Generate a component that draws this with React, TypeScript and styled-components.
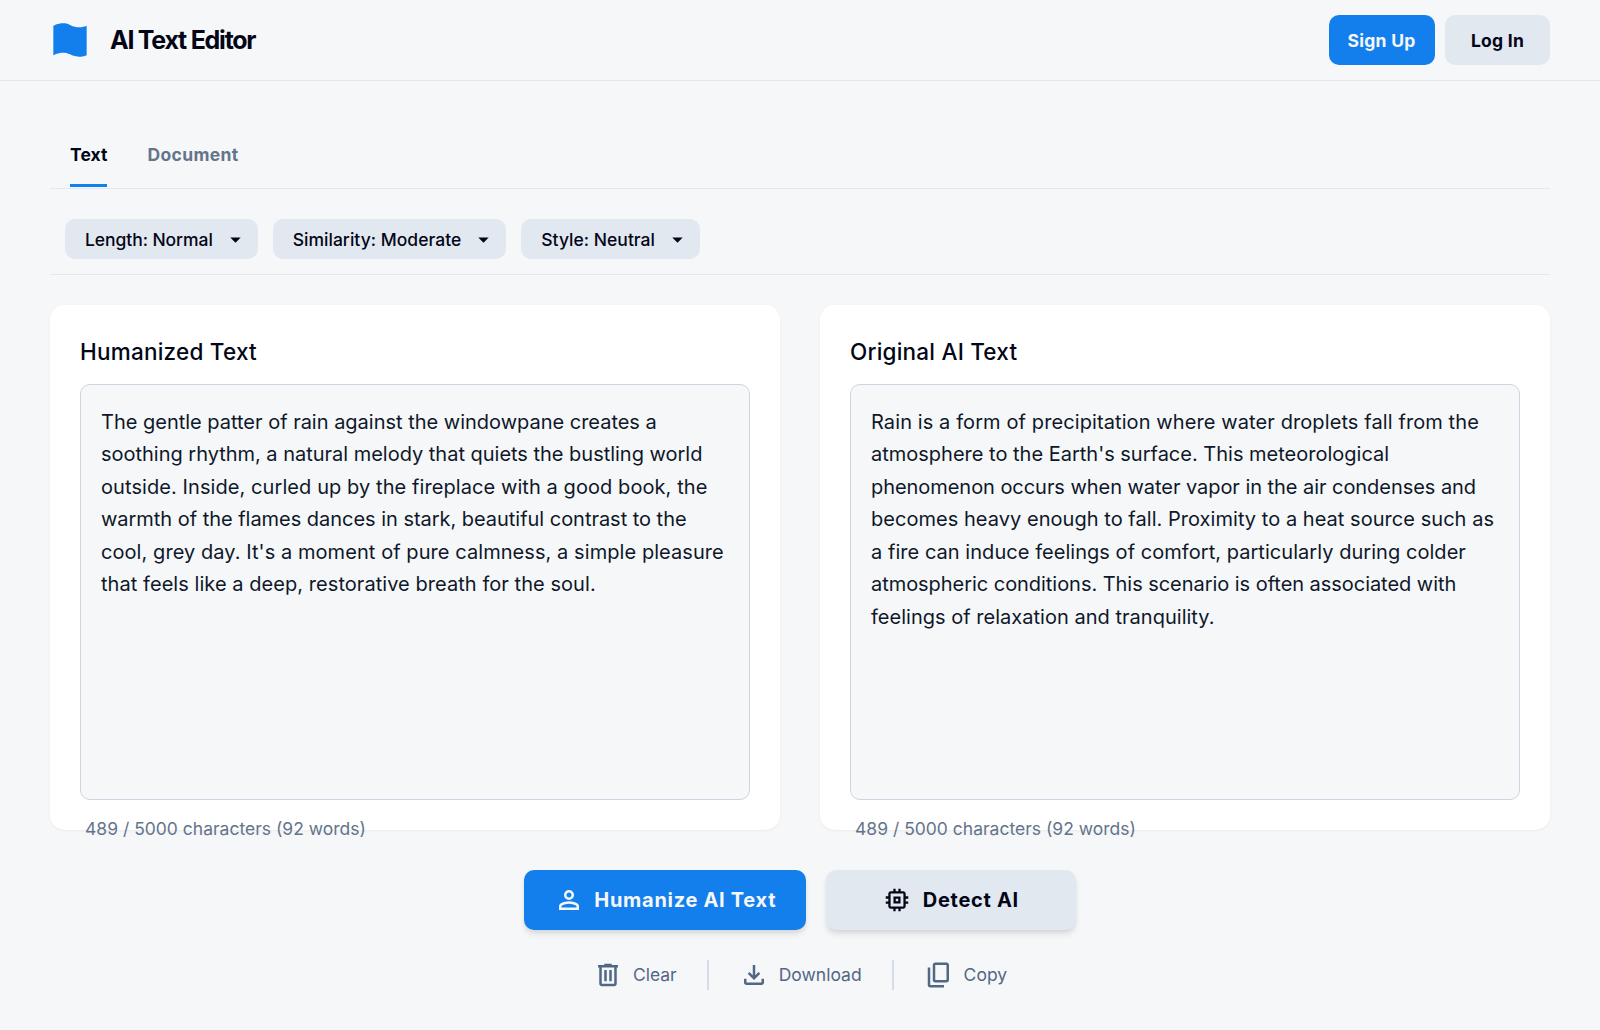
import React from 'react';
import styled, { createGlobalStyle, css } from 'styled-components';

const color = {
  page: '#f6f7f8',
  primary: '#137fec',
  soft: '#e2e8f0',
  border: '#cbd5e1',
  ink: '#020617',
  body: '#0f172a',
  muted: '#64748b',
  tool: '#526785',
};

const GlobalStyle = createGlobalStyle`
  *, *::before, *::after { box-sizing: border-box; }
  body {
    margin: 0;
    background: ${color.page};
    color: ${color.ink};
    font-family: Inter, "Liberation Sans", sans-serif;
  }
  button { font: inherit; border: 0; margin: 0; cursor: pointer; }
`;

const Page = styled.div`
  display: flex;
  flex-direction: column;
  min-height: 1030px;
`;

const Header = styled.header`
  display: flex;
  align-items: center;
  justify-content: space-between;
  height: 81px;
  padding: 0 50px;
  border-bottom: 1px solid ${color.soft};
`;

const Brand = styled.div`
  display: flex;
  align-items: center;
  gap: 20px;
`;

const Logo = styled.svg`
  width: 40px;
  height: 40px;
  color: ${color.primary};
`;

const BrandName = styled.h1`
  margin: 0;
  font-size: 25px;
  line-height: 31px;
  font-weight: 700;
  letter-spacing: -0.05em;
`;

const HeaderActions = styled.div`
  display: flex;
  gap: 10px;
`;

const AccountButton = styled.button<{ $primary?: boolean }>`
  min-width: 105px;
  height: 50px;
  padding: ${p => (p.$primary ? '2px 19.5px 0 19px' : '2px 20px 0')};
  border-radius: 10px;
  font-size: 17.5px;
  line-height: 26px;
  font-weight: 700;
  letter-spacing: 0.26px;
  background: ${p => (p.$primary ? color.primary : color.soft)};
  color: ${p => (p.$primary ? color.page : color.ink)};
`;

const Main = styled.main`
  display: flex;
  flex-direction: column;
  padding: 40px 50px;
`;

const Tabs = styled.nav`
  display: flex;
  gap: 40px;
  height: 68px;
  padding: 0 20px;
  border-bottom: 1px solid ${color.soft};
`;

const Tab = styled.button<{ $active?: boolean }>`
  height: 66px;
  padding: 21px 0 0;
  background: none;
  display: flex;
  font-size: 17.5px;
  line-height: 26px;
  font-weight: 700;
  letter-spacing: ${p => (p.$active ? '0.07px' : '0.35px')};
  color: ${p => (p.$active ? color.ink : color.muted)};
  border-bottom: 3px solid ${p => (p.$active ? color.primary : 'transparent')};
`;

const Filters = styled.div`
  display: flex;
  gap: 15px;
  padding: 30px 15px 15px;
  border-bottom: 1px solid ${color.soft};
`;

const Chip = styled.button<{ $tracking: number }>`
  display: flex;
  align-items: center;
  gap: 10px;
  height: 40px;
  padding: 0 10px 0 20px;
  border-radius: 10px;
  background: ${color.soft};
  color: ${color.ink};
  font-size: 17.5px;
  font-weight: 500;
  letter-spacing: ${p => p.$tracking}px;
`;

const Symbol = styled.svg<{ $size: number }>`
  flex: none;
  width: ${p => p.$size}px;
  height: ${p => p.$size}px;
  fill: currentColor;
`;

const Panels = styled.section`
  display: grid;
  grid-template-columns: 1fr 1fr;
  gap: 40px;
  margin-top: 30px;
`;

const Panel = styled.article`
  display: flex;
  flex-direction: column;
  height: 525px;
  padding: 29px 30px 30px;
  border-radius: 15px;
  background: #ffffff;
  box-shadow: 0 1px 2.5px rgba(0, 0, 0, 0.05);
`;

const PanelTitle = styled.h2`
  margin: 0 0 15px;
  font-size: 22.5px;
  line-height: 35px;
  font-weight: 500;
  letter-spacing: 0.22px;
`;

const TextBox = styled.div`
  flex: none;
  height: 416px;
  padding: 20.5px 20px 20px;
  border: 1px solid ${color.border};
  border-radius: 10px;
  background: ${color.page};
  color: ${color.body};
  font-size: 20px;
  line-height: 32.5px;
`;

const Line = styled.div<{ $tracking: number }>`
  white-space: nowrap;
  letter-spacing: ${p => p.$tracking}px;
`;

const Counter = styled.p`
  margin: 16px 5px 0;
  font-size: 17.5px;
  line-height: 26px;
  color: ${color.muted};
`;

const MainActions = styled.div`
  display: flex;
  justify-content: center;
  gap: 20px;
  margin-top: 40px;
`;

const ActionButton = styled.button<{ $primary?: boolean }>`
  display: flex;
  align-items: center;
  justify-content: center;
  gap: 10.5px;
  min-width: 250px;
  height: 60px;
  padding: ${p => (p.$primary ? '0 30px' : '0 31px 0 30px')};
  border-radius: 10px;
  font-size: 20px;
  font-weight: 700;
  letter-spacing: 0.7px;
  box-shadow: 0 5px 7.5px -1px rgba(0, 0, 0, 0.1), 0 2.5px 5px -2.5px rgba(0, 0, 0, 0.1);
  ${p =>
    p.$primary
      ? css`background: ${color.primary}; color: ${color.page};`
      : css`background: ${color.soft}; color: ${color.ink};`}
`;

const Tools = styled.div`
  display: flex;
  justify-content: center;
  gap: 30px;
  height: 30px;
  margin-top: 30px;
`;

const Tool = styled.button`
  display: flex;
  align-items: center;
  gap: 10px;
  padding: 0;
  background: none;
  color: ${color.tool};
  font-size: 17.5px;
  line-height: 28px;
`;

const ToolLabel = styled.span`
  padding-bottom: 1px;
`;

const Divider = styled.span`
  width: 2px;
  background: #d5dde8;
`;

const paths = {
  caret: 'M480-360 280-560h400L480-360Z',
  person:
    'M480-480q-66 0-113-47t-47-113q0-66 47-113t113-47q66 0 113 47t47 113q0 66-47 113t-113 47ZM160-160v-112q0-34 17.5-62.5T224-378q62-31 126-46.5T480-440q66 0 130 15.5T736-378q29 15 46.5 43.5T800-272v112H160Zm80-80h480v-32q0-11-5.5-20T700-306q-54-27-109-40.5T480-360q-56 0-111 13.5T260-306q-9 5-14.5 14t-5.5 20v32Zm240-320q33 0 56.5-23.5T560-640q0-33-23.5-56.5T480-720q-33 0-56.5 23.5T400-640q0 33 23.5 56.5T480-560Z',
  memory:
    'M367-367v-226h226v226H367Zm73-73h80v-80h-80v80Zm-78 320v-82h-80q-33 0-56.5-23.5T202-282v-80h-82v-74h82v-88h-82v-74h82v-80q0-33 23.5-56.5T282-758h80v-82h74v82h88v-82h74v82h80q33 0 56.5 23.5T758-678v80h82v74h-82v88h82v74h-82v80q0 33-23.5 56.5T678-202h-80v82h-74v-82h-88v82h-74Zm323-155v-410H275v410h410Z',
  trash:
    'M280-120q-33 0-56.5-23.5T200-200v-520h-40v-80h200v-40h240v40h200v80h-40v520q0 33-23.5 56.5T680-120H280Zm400-600H280v520h400v-520ZM360-280h80v-360h-80v360Zm160 0h80v-360h-80v360Z',
  download:
    'M480-320 280-520l56-58 104 104v-326h80v326l104-104 56 58-200 200ZM240-160q-33 0-56.5-23.5T160-240v-120h80v120h480v-120h80v120q0 33-23.5 56.5T720-160H240Z',
  copy:
    'M360-240q-33 0-56.5-23.5T280-320v-480q0-33 23.5-56.5T360-880h360q33 0 56.5 23.5T800-800v480q0 33-23.5 56.5T720-240H360Zm0-80h360v-480H360v480ZM200-80q-33 0-56.5-23.5T120-160v-560h80v560h440v80H200Z',
};

function Icon({ name, size = 30 }: { name: keyof typeof paths; size?: number }) {
  return (
    <Symbol $size={size} viewBox="0 -960 960 960" aria-hidden>
      <path d={paths[name]} />
    </Symbol>
  );
}

type Tracked = [text: string, tracking: number];

const filters: Tracked[] = [
  ['Length: Normal', -0.07],
  ['Similarity: Moderate', 0.02],
  ['Style: Neutral', 0.02],
];

const panels: { title: string; lines: Tracked[] }[] = [
  {
    title: 'Humanized Text',
    lines: [
      ['The gentle patter of rain against the windowpane creates a', -0.01],
      ['soothing rhythm, a natural melody that quiets the bustling world', -0.016],
      ['outside. Inside, curled up by the fireplace with a good book, the', 0.08],
      ['warmth of the flames dances in stark, beautiful contrast to the', -0.03],
      ["cool, grey day. It's a moment of pure calmness, a simple pleasure", 0.068],
      ['that feels like a deep, restorative breath for the soul.', 0.055],
    ],
  },
  {
    title: 'Original AI Text',
    lines: [
      ['Rain is a form of precipitation where water droplets fall from the', 0.1],
      ["atmosphere to the Earth's surface. This meteorological", 0],
      ['phenomenon occurs when water vapor in the air condenses and', -0.05],
      ['becomes heavy enough to fall. Proximity to a heat source such as', 0.04],
      ['a fire can induce feelings of comfort, particularly during colder', 0.045],
      ['atmospheric conditions. This scenario is often associated with', -0.045],
      ['feelings of relaxation and tranquility.', 0.02],
    ],
  },
];

export default function App() {
  return (
    <Page>
      <GlobalStyle />
      <Header>
        <Brand>
          <Logo viewBox="0 0 48 48" fill="none" aria-hidden>
            <path
              d="M4 42.4379C4 42.4379 14.0962 36.0744 24 41.1692C35.0664 46.8624 44 42.2078 44 42.2078L44 7.01134C44 7.01134 35.068 11.6577 24.0031 5.96913C14.0971 0.876274 4 7.27094 4 7.27094L4 42.4379Z"
              fill="currentColor"
            />
          </Logo>
          <BrandName>AI Text Editor</BrandName>
        </Brand>
        <HeaderActions>
          <AccountButton $primary>Sign Up</AccountButton>
          <AccountButton>Log In</AccountButton>
        </HeaderActions>
      </Header>
      <Main>
        <Tabs>
          <Tab $active>Text</Tab>
          <Tab>Document</Tab>
        </Tabs>
        <Filters>
          {filters.map(([label, tracking]) => (
            <Chip key={label} $tracking={tracking}>
              {label}
              <Icon name="caret" size={25} />
            </Chip>
          ))}
        </Filters>
        <Panels>
          {panels.map(panel => (
            <Panel key={panel.title}>
              <PanelTitle>{panel.title}</PanelTitle>
              <TextBox>
                {panel.lines.map(([line, tracking]) => (
                  <Line key={line} $tracking={tracking}>
                    {line}
                  </Line>
                ))}
              </TextBox>
              <Counter>489 / 5000 characters (92 words)</Counter>
            </Panel>
          ))}
        </Panels>
        <MainActions>
          <ActionButton $primary>
            <Icon name="person" />
            Humanize AI Text
          </ActionButton>
          <ActionButton>
            <Icon name="memory" />
            Detect AI
          </ActionButton>
        </MainActions>
        <Tools>
          <Tool>
            <Icon name="trash" />
            <ToolLabel>Clear</ToolLabel>
          </Tool>
          <Divider />
          <Tool>
            <Icon name="download" />
            <ToolLabel>Download</ToolLabel>
          </Tool>
          <Divider />
          <Tool>
            <Icon name="copy" />
            <ToolLabel>Copy</ToolLabel>
          </Tool>
        </Tools>
      </Main>
    </Page>
  );
}
